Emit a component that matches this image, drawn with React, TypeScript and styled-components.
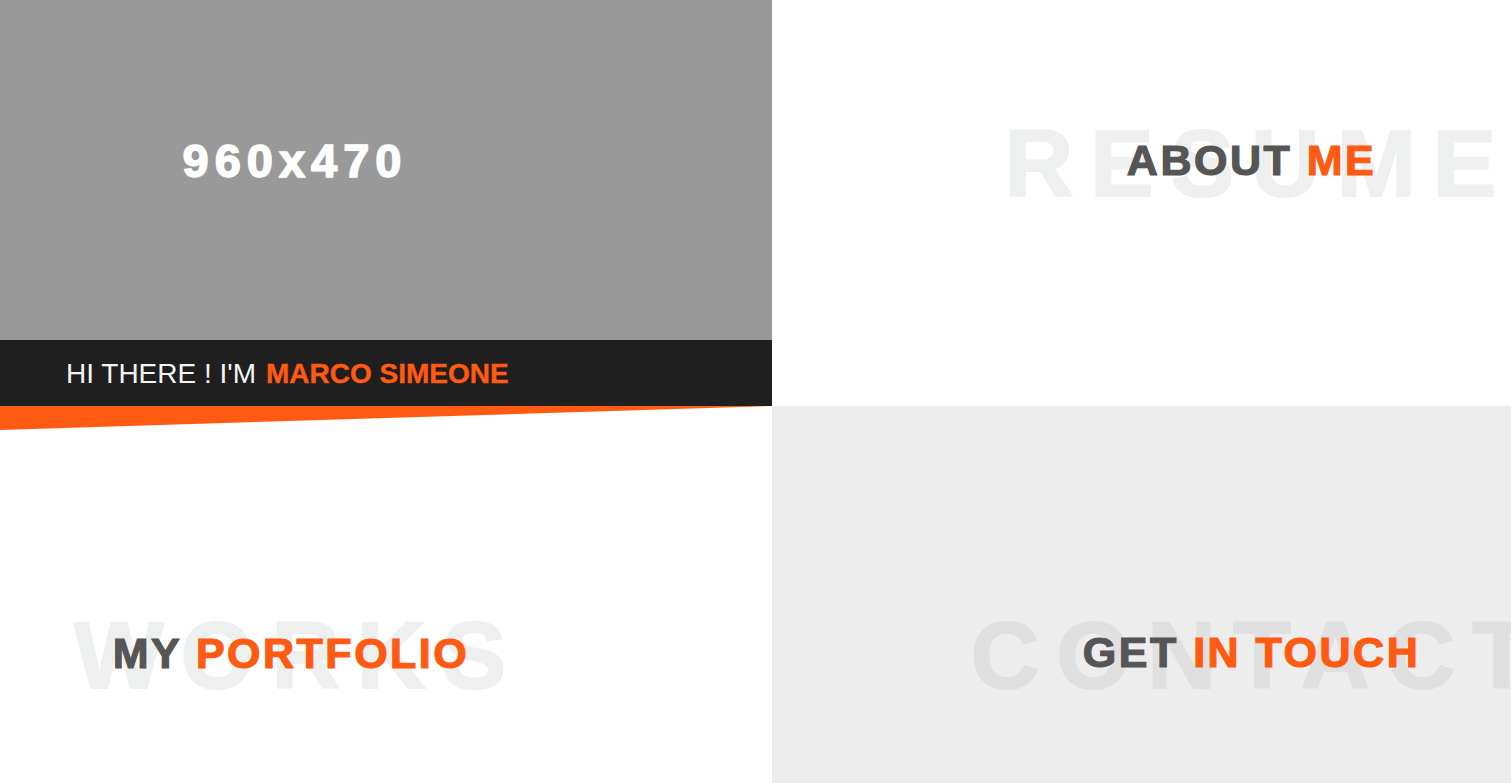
import React from 'react';
import styled, { createGlobalStyle } from 'styled-components';

const Colors = {
  Orange: '#ff5a12',
  Dark: '#1f1f1f',
  Text: '#555555',
  Placeholder: '#999999',
  GreyPanel: '#ededed',
  GhostLight: '#eef0ef',
  GhostDark: '#dfe0df',
};

const GlobalStyle = createGlobalStyle`
  html, body {
    margin: 0;
    padding: 0;
    background: #ffffff;
    font-family: 'Liberation Sans', Arial, sans-serif;
  }
`;

const Page = styled.div`
  display: grid;
  grid-template-columns: 772px 1fr;
  grid-template-rows: 406px 377px;
  width: 100%;
  height: 783px;
  overflow: hidden;
`;

const HeroColumn = styled.div`
  display: flex;
  flex-direction: column;
`;

const Placeholder = styled.div`
  height: 340px;
  background-color: ${Colors.Placeholder};
  display: flex;
  align-items: center;
  justify-content: center;
  padding: 0 182px 20px 0;
  box-sizing: border-box;
  color: #ffffff;
  font-size: 47px;
  font-weight: 700;
  letter-spacing: 6px;
  -webkit-text-stroke: 1.4px #ffffff;
  text-shadow: 0 0 2px rgba(255, 255, 255, 0.5);
`;

const IntroBar = styled.div`
  flex: 1;
  background-color: ${Colors.Dark};
  display: flex;
  align-items: center;
  padding: 2px 0 0 66px;
  font-size: 28px;
  color: #f4f4f4;
`;

const Highlight = styled.span<{ bold?: boolean }>`
  color: ${Colors.Orange};
  font-weight: ${({ bold }) => (bold ? 700 : 'inherit')};
`;

const NameHighlight = styled(Highlight)`
  margin-left: 10px;
  -webkit-text-stroke: 0.4px ${Colors.Orange};
`;

type PanelProps = {
  tone?: 'white' | 'grey';
  padTop?: number;
  padBottom?: number;
  padLeft?: number;
  padRight?: number;
};

const Panel = styled.div<PanelProps>`
  display: flex;
  flex-direction: column;
  background-color: ${({ tone }) => (tone === 'grey' ? Colors.GreyPanel : '#ffffff')};
  overflow: hidden;
`;

const PanelBody = styled.div<PanelProps>`
  flex: 1;
  display: flex;
  align-items: center;
  justify-content: center;
  padding: ${({ padTop = 0, padRight = 0, padBottom = 0, padLeft = 0 }) =>
    `${padTop}px ${padRight}px ${padBottom}px ${padLeft}px`};
`;

const Slant = styled.div`
  height: 24px;
  flex-shrink: 0;
  background-color: ${Colors.Orange};
  clip-path: polygon(0 0, 100% 0, 0 100%);
`;

const Stack = styled.div`
  display: grid;
  grid-template-areas: 'stack';
  place-items: center;
  white-space: nowrap;
`;

const GhostWord = styled.div<{ onGrey?: boolean }>`
  grid-area: stack;
  font-size: 95px;
  font-weight: 700;
  letter-spacing: 17px;
  margin-right: -17px;
  line-height: 1;
  color: ${({ onGrey }) => (onGrey ? Colors.GhostDark : Colors.GhostLight)};
  -webkit-text-stroke: 2px ${({ onGrey }) => (onGrey ? Colors.GhostDark : Colors.GhostLight)};
`;

const Heading = styled.h2<{ shift?: number }>`
  grid-area: stack;
  margin: 0 -2px 0 0;
  font-size: 43px;
  font-weight: 700;
  letter-spacing: 2.5px;
  color: ${Colors.Text};
  -webkit-text-stroke: 1.2px ${Colors.Text};
  transform: translateY(${({ shift = 0 }) => shift}px);

  span {
    -webkit-text-stroke: 1.2px ${Colors.Orange};
  }
`;

type SectionProps = {
  ghost: string;
  lead: string;
  accent: string;
  onGrey?: boolean;
  shift?: number;
};

const SectionTitle: React.FC<SectionProps> = ({ ghost, lead, accent, onGrey, shift }) => (
  <Stack>
    <GhostWord onGrey={onGrey}>{ghost}</GhostWord>
    <Heading shift={shift}>
      {lead} <Highlight>{accent}</Highlight>
    </Heading>
  </Stack>
);

const App: React.FC = () => (
  <>
    <GlobalStyle />
    <Page>
      <HeroColumn>
        <Placeholder>960x470</Placeholder>
        <IntroBar>
          HI THERE ! I'M<NameHighlight bold>MARCO SIMEONE</NameHighlight>
        </IntroBar>
      </HeroColumn>

      <Panel>
        <PanelBody padLeft={218} padBottom={80}>
          <SectionTitle ghost="RESUME" lead="ABOUT" accent="ME" shift={-3} />
        </PanelBody>
      </Panel>

      <Panel>
        <Slant />
        <PanelBody padRight={192} padTop={97}>
          <SectionTitle ghost="WORKS" lead="MY" accent="PORTFOLIO" shift={-2} />
        </PanelBody>
      </Panel>

      <Panel tone="grey">
        <PanelBody padLeft={218} padTop={121}>
          <SectionTitle ghost="CONTACT" lead="GET" accent="IN TOUCH" onGrey shift={-3} />
        </PanelBody>
      </Panel>
    </Page>
  </>
);

export default App;
